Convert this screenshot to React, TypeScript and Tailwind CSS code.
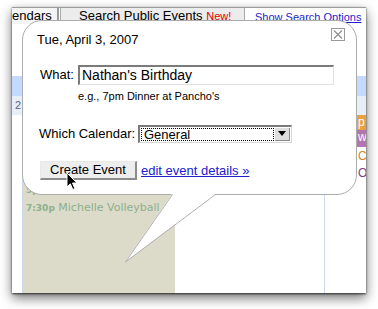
import type { ReactNode } from 'react';

// ─── Small pieces ─────────────────────────────────────────────────────────────

function CloseBox() {
    return (
        <div className="absolute right-[11px] top-[7px] w-[14px] h-[13px] border border-[#9a9a9a] bg-white flex items-center justify-center">
            <svg width="10" height="9" viewBox="0 0 10 9">
                <path d="M1 0.5 L9 8.5 M9 0.5 L1 8.5" stroke="#8a8a8a" strokeWidth="1.1" fill="none" />
            </svg>
        </div>
    );
}

function Cursor() {
    return (
        <svg className="absolute left-[43px] top-[151px]" width="12" height="19" viewBox="0 0 12 19">
            <path
                d="M1 1 L1 15 L4.3 11.8 L6.8 17.5 L8.9 16.6 L6.5 11 L11 11 Z"
                fill="#000"
                stroke="#fff"
                strokeWidth="1"
                strokeLinejoin="round"
            />
        </svg>
    );
}

function Tail() {
    return (
        <svg className="absolute left-[-1px] top-[173px]" width="335" height="72" viewBox="0 0 335 72">
            <polygon points="150,0 193,0 103,68" fill="#fff" />
            <polyline points="150.5,0.5 103.5,68 193.5,0.5" fill="none" stroke="#b0b0b0" strokeWidth="1" />
        </svg>
    );
}

function Row({ children, className }: { children: ReactNode; className: string }) {
    return <div className={`flex items-center ${className}`}>{children}</div>;
}

// ─── Quick-add bubble ─────────────────────────────────────────────────────────

function QuickAdd() {
    return (
        <div className="absolute left-[10px] top-[13px] w-[335px] h-[175px] rounded-[20px] border border-[#acacac] bg-white text-black">
            <CloseBox />
            <div className="pl-[14px] pt-[11px] text-[13px] leading-[15px]">Tue, April 3, 2007</div>

            <Row className="mt-[18px] pl-[17px]">
                <span className="w-[38px] text-[13px]">What:</span>
                <div className="w-[256px] h-[20px] border-t-2 border-l-2 border-r border-b border-t-[#7b7b7b] border-l-[#7b7b7b] border-r-[#e2e2e2] border-b-[#e2e2e2] flex items-center pl-[2px] text-[14px]">
                    Nathan's Birthday
                </div>
            </Row>

            <div className="mt-[5px] pl-[55px] text-[11px] leading-[13px]">e.g., 7pm Dinner at Pancho's</div>

            <Row className="mt-[21px] pl-[16px]">
                <span className="w-[99px] text-[13px]">Which Calendar:</span>
                <div className="w-[154px] h-[18px] border-t-2 border-l-2 border-r border-b border-t-[#7b7b7b] border-l-[#7b7b7b] border-r-[#d8d8d8] border-b-[#d8d8d8] flex items-stretch p-[1px]">
                    <div className="flex-1 border border-dotted border-black flex items-center pl-[2px] text-[13px]">General</div>
                    <div className="w-[15px] ml-[1px] bg-[#dedede] border-r border-b border-[#8a8a8a] flex items-center justify-center">
                        <svg width="8" height="5" viewBox="0 0 8 5">
                            <path d="M0 0 H8 L4 5 Z" fill="#000" />
                        </svg>
                    </div>
                </div>
            </Row>

            <Row className="mt-[17px] pl-[17px]">
                <button className="w-[97px] h-[19px] bg-[#ededed] border-t border-l border-r-2 border-b-2 border-t-[#e8e8e8] border-l-[#e8e8e8] border-r-[#8c8c8c] border-b-[#8c8c8c] text-[13px] leading-none flex items-center justify-center">
                    Create Event
                </button>
                <a className="ml-[4px] text-[13px] text-[#2020cc] underline">edit event details »</a>
            </Row>

            <Cursor />
            <Tail />
        </div>
    );
}

// ─── Calendar behind ──────────────────────────────────────────────────────────

export default function App() {
    return (
        <div className="w-[378px] h-[309px] bg-white pl-[12px] pt-[7px] overflow-hidden font-['Liberation_Sans',Arial,sans-serif]">
            <div className="relative w-[354px] h-[286px] bg-white shadow-[0_1px_2px_rgba(0,0,0,0.7),0_5px_11px_rgba(0,0,0,0.55)] flex flex-col">
                {/* tabs */}
                <div className="h-[17px] flex border-t border-[#9c9c9c] text-[13px] leading-[15px]">
                    <div className="w-[47px] bg-[#f4f4f4] border-r-2 border-[#9a9a9a] overflow-hidden whitespace-nowrap">endars</div>
                    <div className="ml-[1px] w-[185px] bg-[#ececec] border-l border-r border-[#a9a9a9] pl-[18px] whitespace-nowrap">
                        Search Public Events <span className="text-[11px] text-[#e00000]">New!</span>
                    </div>
                    <a className="ml-[10px] mt-[3px] text-[11px] leading-[12px] text-[#1d1dcc] underline whitespace-nowrap">Show Search Options</a>
                </div>

                <div className="h-[52px]" />
                <div className="h-[20px] bg-[#c3d9ff]" />
                <div className="h-[19px] bg-[#e8eef7] flex items-center">
                    <span className="pl-[3px] text-[11px] text-[#5a6680]">2</span>
                </div>

                <div className="flex-1 grid grid-cols-[11px_152px_150px_41px] overflow-hidden">
                    <div className="border-r border-[#cdd8ea]">
                        <div className="mt-[-3px] ml-[2px] w-[3px] h-[1px] bg-[#e08a20]" />
                    </div>
                    <div className="bg-[#dcdbc9] pt-[68px] pl-[3px] font-['DejaVu_Sans',Verdana,sans-serif] text-[#8db08d] whitespace-nowrap">
                        <div className="h-[18px] text-[11px] leading-[14px]">
                            <b className="text-[9px]">5p</b> Tennis
                        </div>
                        <div className="h-[14px] text-[11px] leading-[14px]">
                            <b className="text-[9px]">7:30p</b> Michelle Volleyball
                        </div>
                    </div>
                    <div className="border-r border-[#cdd8ea]" />
                    <div className="flex flex-col text-[12px] leading-[15px] whitespace-nowrap overflow-hidden">
                        <div className="h-[15px] bg-[#e8a040] text-white pl-[33px]">p</div>
                        <div className="h-[17px] bg-[#b474b4] text-white pl-[33px]">w</div>
                        <div className="mt-[2px] h-[17px] text-[#d88420] pl-[33px]">C</div>
                        <div className="h-[17px] text-[#7d3c86] pl-[33px]">O</div>
                    </div>
                </div>

                <QuickAdd />
            </div>
        </div>
    );
}
